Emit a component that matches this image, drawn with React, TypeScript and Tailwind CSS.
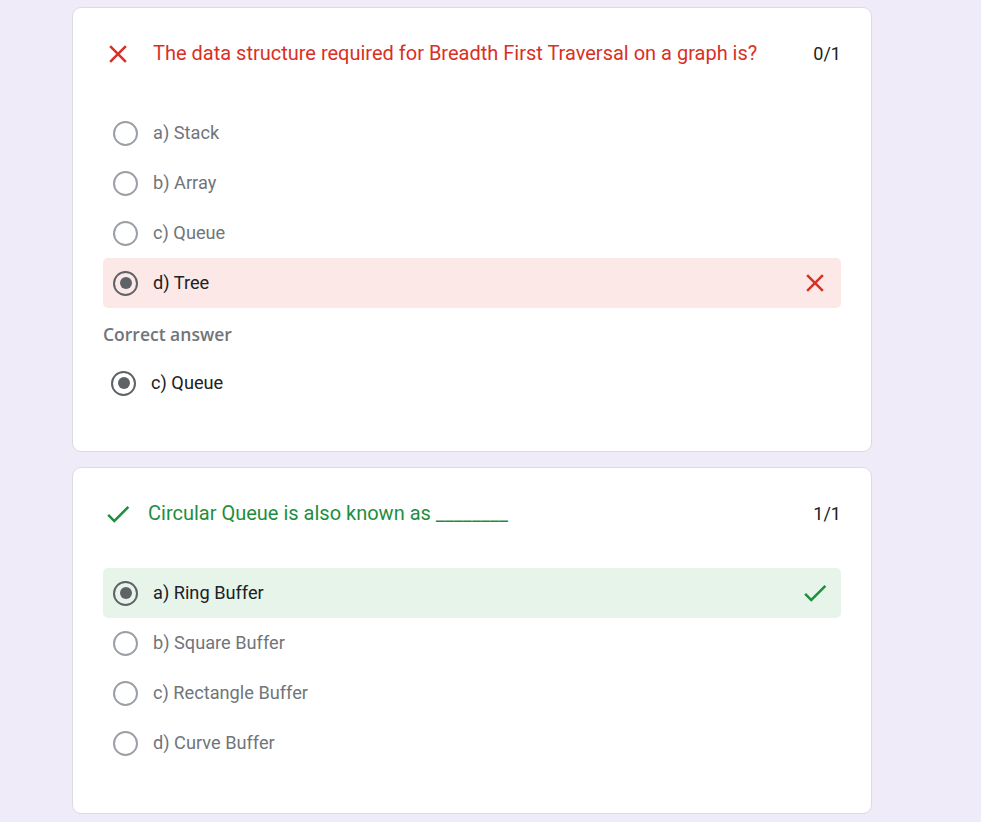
import React from 'react'

const FONT = { fontFamily: 'Roboto, "Liberation Sans", Arial, sans-serif' }

function CloseIcon({ className }: { className?: string }) {
  return (
    <svg viewBox="0 0 24 24" className={className} fill="currentColor">
      <path d="M19 6.41L17.59 5 12 10.59 6.41 5 5 6.41 10.59 12 5 17.59 6.41 19 12 13.41 17.59 19 19 17.59 13.41 12z" />
    </svg>
  )
}

function CheckIcon({ className }: { className?: string }) {
  return (
    <svg viewBox="0 0 24 24" className={className} fill="currentColor">
      <path d="M9 16.17L4.83 12l-1.42 1.41L9 19 21 7l-1.41-1.41z" />
    </svg>
  )
}

function Radio({ checked }: { checked?: boolean }) {
  return (
    <span
      className={`flex h-[25px] w-[25px] shrink-0 items-center justify-center rounded-full border-[2.5px] ${
        checked ? 'border-[#5f6368]' : 'border-[#9aa0a6]'
      }`}
    >
      {checked && <span className="h-[12px] w-[12px] rounded-full bg-[#5f6368]" />}
    </span>
  )
}

type Option = { label: string; checked?: boolean; state?: 'wrong' | 'right' }

function OptionRow({ o }: { o: Option }) {
  const bg = o.state === 'wrong' ? 'bg-[#fce8e6]' : o.state === 'right' ? 'bg-[#e6f4ea]' : ''
  return (
    <div className={`flex h-[50px] items-center rounded-[5px] pl-[10px] pr-[11px] ${bg}`}>
      <Radio checked={o.checked} />
      <span
        className={`ml-[15px] flex-1 pb-[1px] text-[18.2px] ${o.checked ? 'text-[#202124]' : 'text-[#70757a]'}`}
      >
        {o.label}
      </span>
      {o.state === 'wrong' && <CloseIcon className="h-[30px] w-[30px] text-[#d93025]" />}
      {o.state === 'right' && <CheckIcon className="h-[30px] w-[30px] text-[#1e8e3e]" />}
    </div>
  )
}

export default function App() {
  const q1: Option[] = [
    { label: 'a) Stack' },
    { label: 'b) Array' },
    { label: 'c) Queue' },
    { label: 'd) Tree', checked: true, state: 'wrong' },
  ]
  const q2: Option[] = [
    { label: 'a) Ring Buffer', checked: true, state: 'right' },
    { label: 'b) Square Buffer' },
    { label: 'c) Rectangle Buffer' },
    { label: 'd) Curve Buffer' },
  ]

  return (
    <div className="min-h-[822px] bg-[#f0ebf8] pt-[7px]" style={FONT}>
      <div className="ml-[72px] flex w-[800px] flex-col gap-[15px]">
        {/* Question 1 */}
        <div className="rounded-[9px] border border-[#dadce0] bg-white px-[30px] pt-[31px] pb-[43px]">
          <div className="flex h-[30px] items-center">
            <CloseIcon className="h-[30px] w-[30px] shrink-0 text-[#d93025]" />
            <span className="ml-[20px] flex-1 pb-[2px] text-[20px] text-[#d93025]">
              The data structure required for Breadth First Traversal on a graph is?
            </span>
            <span className="pb-[2px] text-[18px] text-[#202124]">0/1</span>
          </div>
          <div className="mt-[39px]">
            {q1.map((o) => (
              <OptionRow key={o.label} o={o} />
            ))}
          </div>
          <div
            className="mt-[14px] h-[24px] text-[17.5px] font-semibold leading-[24px] text-[#70757a]"
            style={{ fontFamily: '"Open Sans", Lato, sans-serif' }}
          >
            Correct answer
          </div>
          <div className="mt-[12px] flex h-[50px] items-center pl-[8px]">
            <Radio checked />
            <span className="ml-[15px] pb-[1px] text-[18.2px] text-[#202124]">c) Queue</span>
          </div>
        </div>

        {/* Question 2 */}
        <div className="rounded-[9px] border border-[#dadce0] bg-white px-[30px] pt-[31px] pb-[45px]">
          <div className="flex h-[30px] items-center">
            <CheckIcon className="h-[30px] w-[30px] shrink-0 text-[#1e8e3e]" />
            <span className="ml-[15px] flex-1 pb-[2px] text-[20px] text-[#1e8e3e]">
              Circular Queue is also known as ________
            </span>
            <span className="pb-[2px] text-[18px] text-[#202124]">1/1</span>
          </div>
          <div className="mt-[39px]">
            {q2.map((o) => (
              <OptionRow key={o.label} o={o} />
            ))}
          </div>
        </div>
      </div>
    </div>
  )
}
